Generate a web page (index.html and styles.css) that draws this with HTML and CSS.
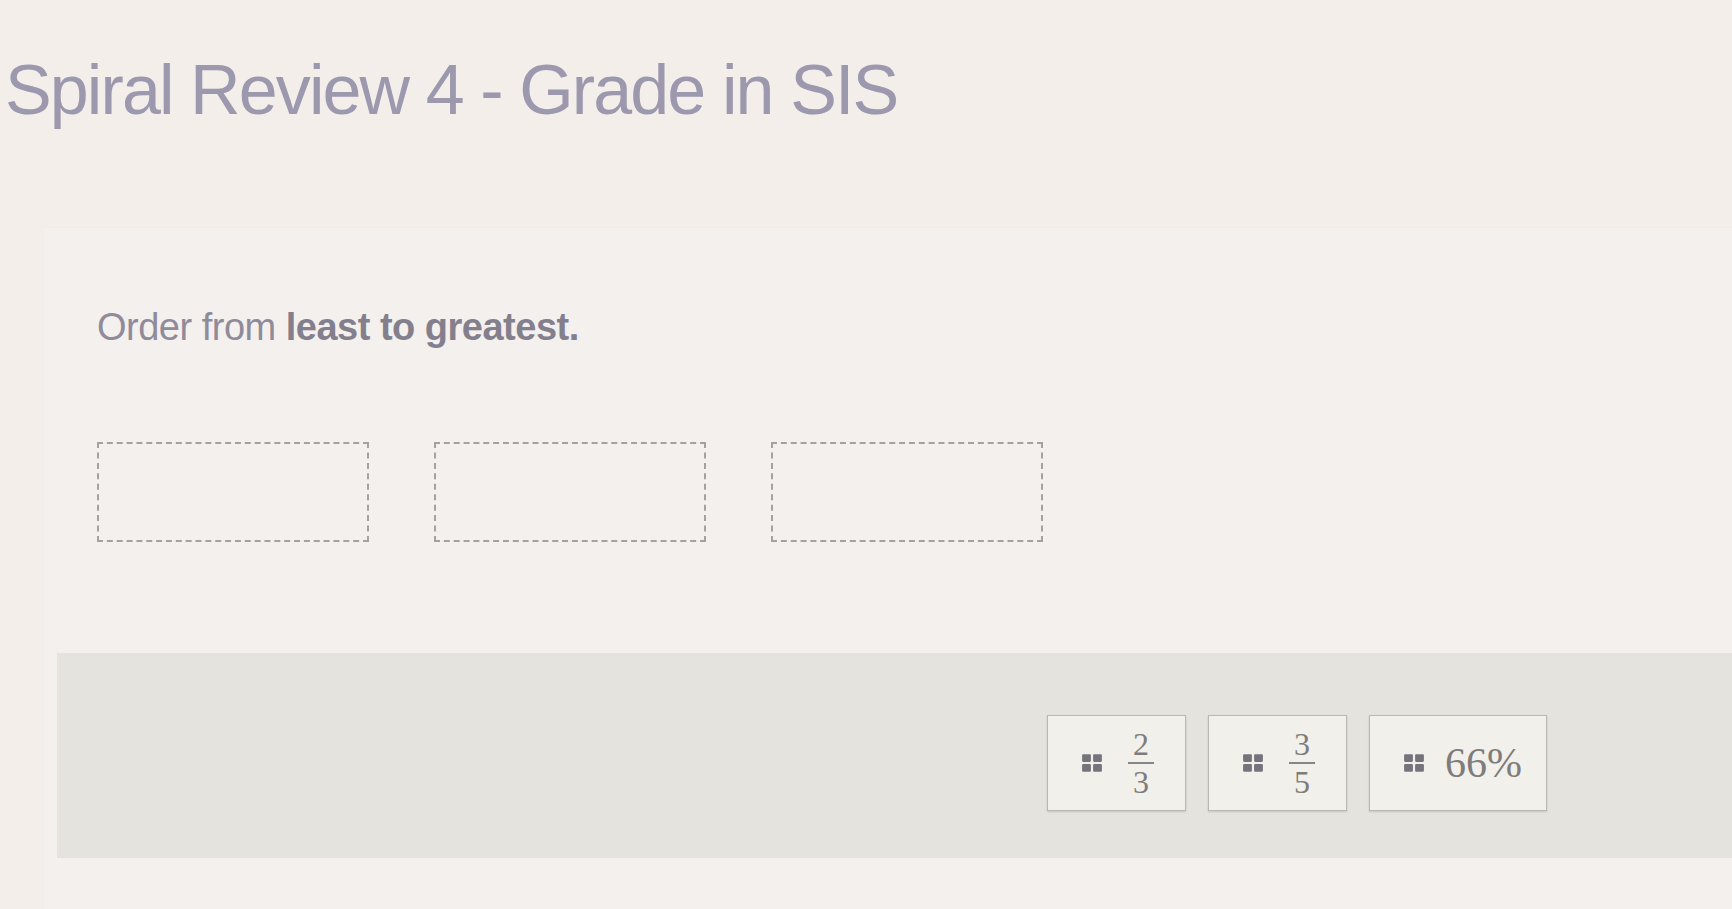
FILE: index.html
```html
<!DOCTYPE html>
<html lang="en">
<head>
<meta charset="utf-8">
<title>Spiral Review 4 - Grade in SIS</title>
<link rel="stylesheet" href="styles.css">
</head>
<body>
<header class="page-header">
  <h1 class="title">Spiral Review 4 - Grade in SIS</h1>
</header>
<main class="panel">
  <section class="question">
    <p class="prompt">Order from <strong>least to greatest.</strong></p>
    <div class="drop-row">
      <div class="drop-zone"></div>
      <div class="drop-zone"></div>
      <div class="drop-zone"></div>
    </div>
  </section>
  <section class="tray">
    <div class="card">
      <svg class="grip" viewBox="0 0 20 18" aria-hidden="true"><rect x="1" y="1" width="8" height="7" rx="1"/><rect x="11" y="1" width="8" height="7" rx="1"/><rect x="1" y="10" width="8" height="7" rx="1"/><rect x="11" y="10" width="8" height="7" rx="1"/></svg>
      <span class="frac"><span class="num">2</span><span class="den">3</span></span>
    </div>
    <div class="card">
      <svg class="grip" viewBox="0 0 20 18" aria-hidden="true"><rect x="1" y="1" width="8" height="7" rx="1"/><rect x="11" y="1" width="8" height="7" rx="1"/><rect x="1" y="10" width="8" height="7" rx="1"/><rect x="11" y="10" width="8" height="7" rx="1"/></svg>
      <span class="frac"><span class="num">3</span><span class="den">5</span></span>
    </div>
    <div class="card card-wide">
      <svg class="grip" viewBox="0 0 20 18" aria-hidden="true"><rect x="1" y="1" width="8" height="7" rx="1"/><rect x="11" y="1" width="8" height="7" rx="1"/><rect x="1" y="10" width="8" height="7" rx="1"/><rect x="11" y="10" width="8" height="7" rx="1"/></svg>
      <span class="pct">66%</span>
    </div>
  </section>
</main>
</body>
</html>
```

FILE: styles.css
```css
html, body {
  margin: 0;
  padding: 0;
}

body {
  width: 1732px;
  height: 909px;
  overflow: hidden;
  background: #f3eeea;
  font-family: "Liberation Sans", Arial, sans-serif;
}

.page-header {
  padding: 55px 0 0 5px;
}

.title {
  margin: 0;
  font-size: 70px;
  line-height: 1;
  font-weight: 400;
  letter-spacing: -1.9px;
  color: #9c98ad;
}

.panel {
  margin: 102px 0 0 44px;
  background: #f4f0ed;
  border-top: 1px solid #f0ece8;
  padding-bottom: 60px;
}

.question {
  padding: 80px 0 0 53px;
}

.prompt {
  margin: 0;
  font-size: 38px;
  line-height: 1;
  letter-spacing: -0.5px;
  color: #8f8b9b;
}

.prompt strong {
  font-weight: 700;
  color: #837f8d;
}

.drop-row {
  display: flex;
  gap: 65px;
  margin-top: 96px;
}

.drop-zone {
  width: 268px;
  height: 96px;
  border: 2px dashed #a4a1a1;
}

.tray {
  margin: 111px 0 0 13px;
  height: 205px;
  background: #e4e3dd;
  display: flex;
  justify-content: flex-end;
  align-items: flex-start;
  gap: 22px;
  padding: 62px 185px 0 0;
  box-sizing: border-box;
}

.card {
  height: 96px;
  box-sizing: border-box;
  display: flex;
  align-items: center;
  gap: 25px;
  padding: 0 31px 0 33px;
  background: #f1f0eb;
  border: 1px solid #bab8b4;
  box-shadow: 0 1px 2px rgba(0, 0, 0, 0.14);
}

.card-wide {
  gap: 20px;
  padding-right: 24px;
}

.grip {
  width: 22px;
  height: 20px;
  fill: #75747d;
  flex: none;
}

.frac {
  display: inline-flex;
  flex-direction: column;
  align-items: stretch;
  font-family: "Liberation Serif", "Times New Roman", serif;
  font-size: 32px;
  line-height: 1;
  color: #7e7c7c;
  text-align: center;
}

.num {
  padding: 0 5px 2px;
  border-bottom: 2px solid #878585;
}

.den {
  padding-top: 2px;
}

.pct {
  font-family: "Liberation Serif", "Times New Roman", serif;
  font-size: 42px;
  line-height: 1;
  color: #7e7c7c;
}
```
